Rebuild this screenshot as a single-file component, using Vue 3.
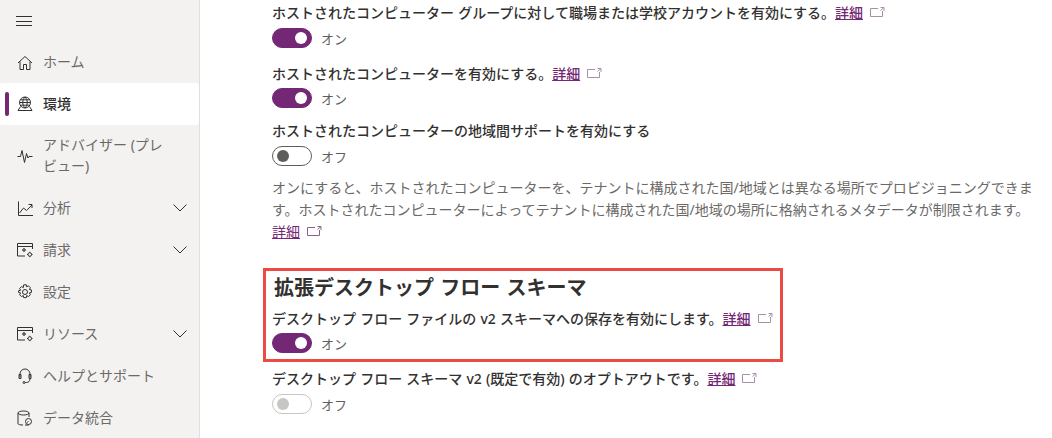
<script setup>
const navItems = [
  { key: 'home', label: 'ホーム' },
  { key: 'env', label: '環境', active: true },
  { key: 'pulse', label: 'アドバイザー (プレビュー)', tall: true },
  { key: 'chart', label: '分析', chevron: true },
  { key: 'billing', label: '請求', chevron: true },
  { key: 'gear', label: '設定' },
  { key: 'billing', label: 'リソース', chevron: true },
  { key: 'headset', label: 'ヘルプとサポート' },
  { key: 'data', label: 'データ統合' },
]
</script>

<template>
  <div class="page">
    <aside class="sidebar">
      <div class="burger">
        <svg width="16" height="12" viewBox="0 0 16 12"><path d="M0 1.500h16M0 6.500h16M0 10.500h16" stroke="#323130" fill="none"/></svg>
      </div>
      <nav>
        <div v-for="item in navItems" :key="item.label" class="nav-item" :class="{ active: item.active, tall: item.tall }">
          <span v-if="item.active" class="marker"></span>
          <span class="icon">
            <svg width="16" height="16" viewBox="0 0 16 16" fill="none" stroke="#323130" stroke-width="1">
              <template v-if="item.key === 'home'"><path d="M1 9 8 2.500 15 9M3 7.500v8h3.500v-5h3v5H13v-8"/></template>
              <template v-else-if="item.key === 'env'"><circle cx="8" cy="6.500" r="5.500"/><path d="M2.500 6.500h11M3.300 3.800h9.400M3.300 9.200h9.400M8 1C5 4 5 9 8 12M8 1c3 3 3 8 0 11M3.500 10.500 1 14.500h14l-2.500-4"/></template>
              <template v-else-if="item.key === 'pulse'"><path d="M.5 8.500h3L5 2.500l2.500 12 2-9L11 10l1-1.500h3.500"/></template>
              <template v-else-if="item.key === 'chart'"><path d="M1.500 1.500v14H16M2.500 13l4-5 3 2.500L15 5M11.500 4.500H15V8"/></template>
              <template v-else-if="item.key === 'billing'"><path d="M15.500 7V1.500H.5V14H8M.5 4.500h15"/><circle cx="7" cy="8" r="1.100"/><path d="M7 6v.9M7 9.100v.9M5 8h.9M8.100 8H9"/><circle cx="12.800" cy="12.500" r="1.800"/><path d="M12.800 9.800v.9M12.800 14.300v.9M10.100 12.500h.9M14.600 12.500h.9"/></template>
              <template v-else-if="item.key === 'gear'"><circle cx="8" cy="8" r="2.500"/><path d="M6.700.8h2.600l.4 2 1.800-1 1.900 1.900-1 1.800 2 .4v2.600l-2 .4 1 1.800-1.900 1.900-1.800-1-.4 2H6.700l-.4-2-1.800 1-1.900-1.900 1-1.800-2-.4V6.700l2-.4-1-1.800 1.900-1.900 1.800 1z"/></template>
              <template v-else-if="item.key === 'headset'"><path d="M3 9.500V6a5 5 0 0 1 10 0v3.500M3 6.500H2v4h2v-4zM12 6.500h2v4h-2zM13 10.500c0 2.800-1.500 4-3.500 4H8"/><circle cx="7" cy="14.500" r="1"/></template>
              <template v-else><ellipse cx="6.500" cy="3" rx="5.500" ry="2"/><path d="M1 3v10.500c0 1 2 1.500 5 1.500M12 3v4"/><circle cx="11.500" cy="11.500" r="3"/><path d="M11.500 11.500a1 1 0 0 0-1 1M8 15h4"/></template>
            </svg>
          </span>
          <span class="nav-label">{{ item.label }}</span>
          <svg v-if="item.chevron" class="chev" width="14" height="8" viewBox="0 0 14 8"><path d="M.5.500 7 7 13.500.5" fill="none" stroke="#323130"/></svg>
        </div>
      </nav>
    </aside>

    <main class="content">
      <section class="setting first">
        <div class="label">ホストされたコンピューター グループに対して職場または学校アカウントを有効にする。<a class="more">詳細</a>
          <svg class="ext" width="15" height="11" viewBox="0 0 15 11"><path d="M8 1.500H.5v8h12V4M10.500 .5H14V4M14 .5l-3.500 3" fill="none" stroke="#a890a8"/></svg>
        </div>
        <div class="toggle-row"><span class="toggle on"><i></i></span><span class="state">オン</span></div>
      </section>
      <section class="setting second">
        <div class="label">ホストされたコンピューターを有効にする。<a class="more">詳細</a>
          <svg class="ext" width="15" height="11" viewBox="0 0 15 11"><path d="M8 1.500H.5v8h12V4M10.500 .5H14V4M14 .5l-3.500 3" fill="none" stroke="#a890a8"/></svg>
        </div>
        <div class="toggle-row"><span class="toggle on"><i></i></span><span class="state">オン</span></div>
      </section>
      <section class="setting third">
        <div class="label">ホストされたコンピューターの地域間サポートを有効にする</div>
        <div class="toggle-row"><span class="toggle off"><i></i></span><span class="state">オフ</span></div>
      </section>
      <p class="desc">オンにすると、ホストされたコンピューターを、テナントに構成された国/地域とは異なる場所でプロビジョニングできます。ホストされたコンピューターによってテナントに構成された国/地域の場所に格納されるメタデータが制限されます。<br><a class="more">詳細</a>
        <svg class="ext" width="15" height="11" viewBox="0 0 15 11"><path d="M8 1.500H.5v8h12V4M10.500 .5H14V4M14 .5l-3.500 3" fill="none" stroke="#8c5f8c"/></svg>
      </p>

      <div class="highlight">
        <h2>拡張デスクトップ フロー スキーマ</h2>
        <div class="label">デスクトップ フロー ファイルの v2 スキーマへの保存を有効にします。<a class="more">詳細</a>
          <svg class="ext" width="15" height="11" viewBox="0 0 15 11"><path d="M8 1.500H.5v8h12V4M10.500 .5H14V4M14 .5l-3.500 3" fill="none" stroke="#a890a8"/></svg>
        </div>
        <div class="toggle-row"><span class="toggle on"><i></i></span><span class="state">オン</span></div>
      </div>

      <section class="setting last">
        <div class="label">デスクトップ フロー スキーマ v2 (既定で有効) のオプトアウトです。<a class="more">詳細</a>
          <svg class="ext" width="15" height="11" viewBox="0 0 15 11"><path d="M8 1.500H.5v8h12V4M10.500 .5H14V4M14 .5l-3.500 3" fill="none" stroke="#a890a8"/></svg>
        </div>
        <div class="toggle-row"><span class="toggle disabled"><i></i></span><span class="state">オフ</span></div>
      </section>
    </main>
  </div>
</template>

<style>
html, body { margin: 0; background: #fff; overflow: hidden; }
</style>

<style scoped>
.page {
  width: 1052px; height: 438px; display: flex; overflow: hidden;
  font-family: "Noto Sans", "Noto Sans CJK JP", sans-serif; font-size: 14px; color: #323130;
}
.sidebar {
  width: 199px; flex: none; background: #f3f2f1; border-right: 1px solid #e1dfdd;
}
.burger { height: 41px; padding-left: 16px; display: flex; align-items: center; }
.nav-item {
  position: relative; height: 42px; display: flex; align-items: center; padding-left: 17px;
  color: #6b6967; line-height: 21px;
}
.nav-item.tall { height: 62px; }
.nav-item.active { background: #fff; color: #323130; font-weight: 500; border-radius: 2px; }
.marker {
  position: absolute; left: 5px; top: 9px; width: 4px; height: 24px; border-radius: 2px; background: #742774;
}
.icon { width: 16px; height: 16px; margin-right: 10px; display: flex; }
.nav-label { width: 120px; padding-bottom: 2px; }
.chev { position: absolute; left: 173px; top: 17px; }
.content { flex: 1; padding-left: 72px; padding-right: 14px; }
.label { font-weight: 500; line-height: 20px; white-space: nowrap; word-spacing: .5px; }
.setting .toggle-row { margin-top: 5px; }
.setting.first { padding-top: 3px; }
.setting.second { padding-top: 16px; }
.setting.second .toggle-row { margin-top: 4px; }
.setting.third { padding-top: 13px; }
.setting.last { padding-top: 7px; }
.more { color: #742774; text-decoration: underline; }
.ext { margin-left: 7px; vertical-align: 0; }
.toggle-row { display: flex; align-items: center; height: 20px; }
.toggle {
  width: 38px; height: 18px; border-radius: 10px; border: 1px solid #605e5c; position: relative; flex: none;
  margin-right: 9px; box-sizing: content-box;
}
.toggle i { position: absolute; width: 12px; height: 12px; border-radius: 50%; top: 3px; }
.toggle.on { background: #742774; border-color: #742774; }
.toggle.on i { background: #fff; right: 4px; }
.toggle.off { background: #fff; }
.toggle.off i { background: #605e5c; left: 4px; }
.toggle.disabled { background: #fff; border-color: #c8c6c4; }
.toggle.disabled i { background: #c8c6c4; left: 4px; }
.state { color: #605e5c; font-size: 13px; }
.desc { margin: 11px 0 0; line-height: 22px; color: #6b6967; width: 766px; }
.highlight {
  margin: 25px 0 0 -9px; width: 520px; height: 94px; border: 3px solid #ee4a44; padding-left: 6px; box-sizing: border-box;
}
h2 { margin: 0; padding: 4px 0 0 2px; font-size: 20px; font-weight: 700; line-height: 26px; word-spacing: 1px; }
.highlight .label { margin-top: 8px; }
.highlight .toggle-row { margin-top: 4px; }
</style>
